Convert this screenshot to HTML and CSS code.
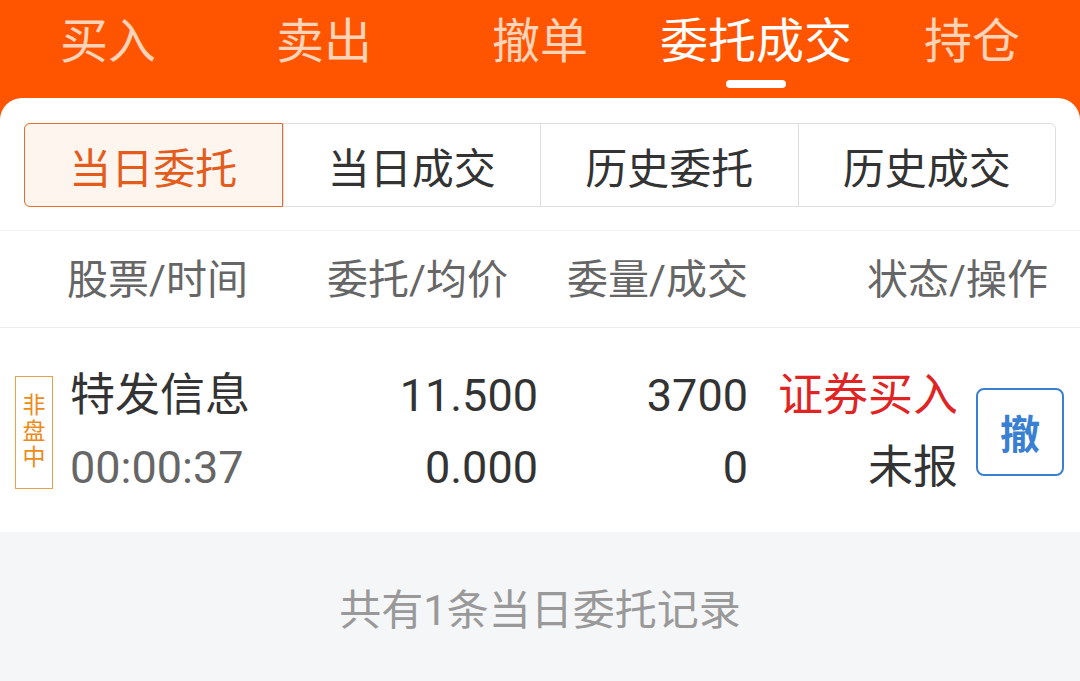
FILE: index.html
```html
<!DOCTYPE html>
<html lang="zh-CN">
<head>
    <meta charset="UTF-8">
    <meta name="viewport" content="width=device-width, initial-scale=1.0">
    <title>委托成交</title>
    <link rel="stylesheet" href="styles.css">
</head>
<body>
    <div class="page">
        <!-- 顶部交易导航 -->
        <div class="tabs">
            <div class="tab">买入</div>
            <div class="tab">卖出</div>
            <div class="tab">撤单</div>
            <div class="tab active">委托成交<span class="bar"></span></div>
            <div class="tab">持仓</div>
        </div>

        <div class="panel">
            <!-- 分段切换 -->
            <div class="segments">
                <div class="seg active">当日委托</div>
                <div class="seg">当日成交</div>
                <div class="seg">历史委托</div>
                <div class="seg">历史成交</div>
            </div>

            <!-- 表头 -->
            <div class="thead">
                <div class="th">股票/时间</div>
                <div class="th right">委托/均价</div>
                <div class="th right">委量/成交</div>
                <div class="th right">状态/操作</div>
            </div>

            <!-- 委托记录 -->
            <div class="row">
                <div class="badge">非<br>盘<br>中</div>
                <div class="cell name">
                    <div>特发信息</div>
                    <div class="sub">00:00:37</div>
                </div>
                <div class="cell price">
                    <div>11.500</div>
                    <div>0.000</div>
                </div>
                <div class="cell qty">
                    <div>3700</div>
                    <div>0</div>
                </div>
                <div class="cell status">
                    <div class="buy">证券买入</div>
                    <div>未报</div>
                </div>
                <button class="cancel" type="button">撤</button>
            </div>
        </div>

        <div class="summary">共有1条当日委托记录</div>
    </div>
</body>
</html>
```

FILE: styles.css
```css
body {
    margin: 0;
    font-family: Roboto, "Noto Sans CJK SC", sans-serif;
    background-color: #f5f6f8;
}
.page {
    width: 1080px;
    background: linear-gradient(#ff5500 0, #ff5500 130px, #f5f6f8 130px);
}
.tabs {
    display: grid;
    grid-template-columns: repeat(5, 1fr);
    height: 98px;
}
.tab {
    display: flex;
    flex-direction: column;
    align-items: center;
    padding-top: 12px;
    font-size: 48px;
    line-height: 60px;
    color: #ffd3b8;
}
.tab.active {
    color: #fff;
}
.tab .bar {
    display: block;
    width: 60px;
    height: 8px;
    margin-top: 8px;
    border-radius: 4px;
    background-color: #fff;
}
.panel {
    background-color: #fff;
    border-radius: 22px 22px 0 0;
    padding-top: 25px;
}
.segments {
    display: flex;
    margin: 0 24px;
    height: 84px;
    border: 1px solid #dedede;
    border-radius: 6px;
    box-sizing: border-box;
}
.seg {
    flex: 1;
    display: flex;
    align-items: center;
    justify-content: center;
    font-size: 42px;
    color: #333;
    border-left: 1px solid #dedede;
}
.seg:first-child {
    border-left: none;
}
.seg.active {
    margin: -1px 0 -1px -1px;
    color: #e45c1c;
    background-color: #fff5ef;
    border: 1px solid #e0702f;
    border-radius: 6px 0 0 6px;
}
.thead {
    display: grid;
    grid-template-columns: 260px 181px 240px 300px;
    align-items: center;
    height: 98px;
    box-sizing: border-box;
    margin-top: 23px;
    padding-left: 67px;
    padding-bottom: 6px;
    border-top: 1px solid #f2f2f2;
    border-bottom: 1px solid #ededed;
    font-size: 41px;
    color: #666;
}
.th.right {
    text-align: right;
}
.row {
    display: flex;
    align-items: center;
    height: 204px;
    box-sizing: border-box;
    padding-left: 15px;
    padding-top: 4px;
    font-size: 45px;
    line-height: 72px;
    color: #333;
}
.badge {
    width: 38px;
    height: 113px;
    box-sizing: border-box;
    display: flex;
    align-items: center;
    justify-content: center;
    border: 1px solid #e8a24a;
    font-size: 23px;
    line-height: 26px;
    text-align: center;
    color: #ee8a18;
}
.cell {
    box-sizing: border-box;
}
.name {
    width: 250px;
    margin-left: 17px;
}
.name .sub {
    color: #666;
}
.price {
    width: 218px;
    text-align: right;
}
.qty {
    width: 210px;
    text-align: right;
}
.status {
    width: 210px;
    text-align: right;
}
.buy {
    color: #e02424;
}
.cancel {
    width: 88px;
    height: 88px;
    margin-left: 18px;
    padding: 0;
    border: 2px solid #3a80d2;
    border-radius: 8px;
    background-color: #fff;
    font-family: "Noto Sans CJK SC", sans-serif;
    font-size: 40px;
    font-weight: bold;
    color: #3a80d2;
}
.summary {
    height: 149px;
    display: flex;
    align-items: center;
    justify-content: center;
    font-size: 42px;
    color: #999;
    background-color: #f5f6f8;
}
```
